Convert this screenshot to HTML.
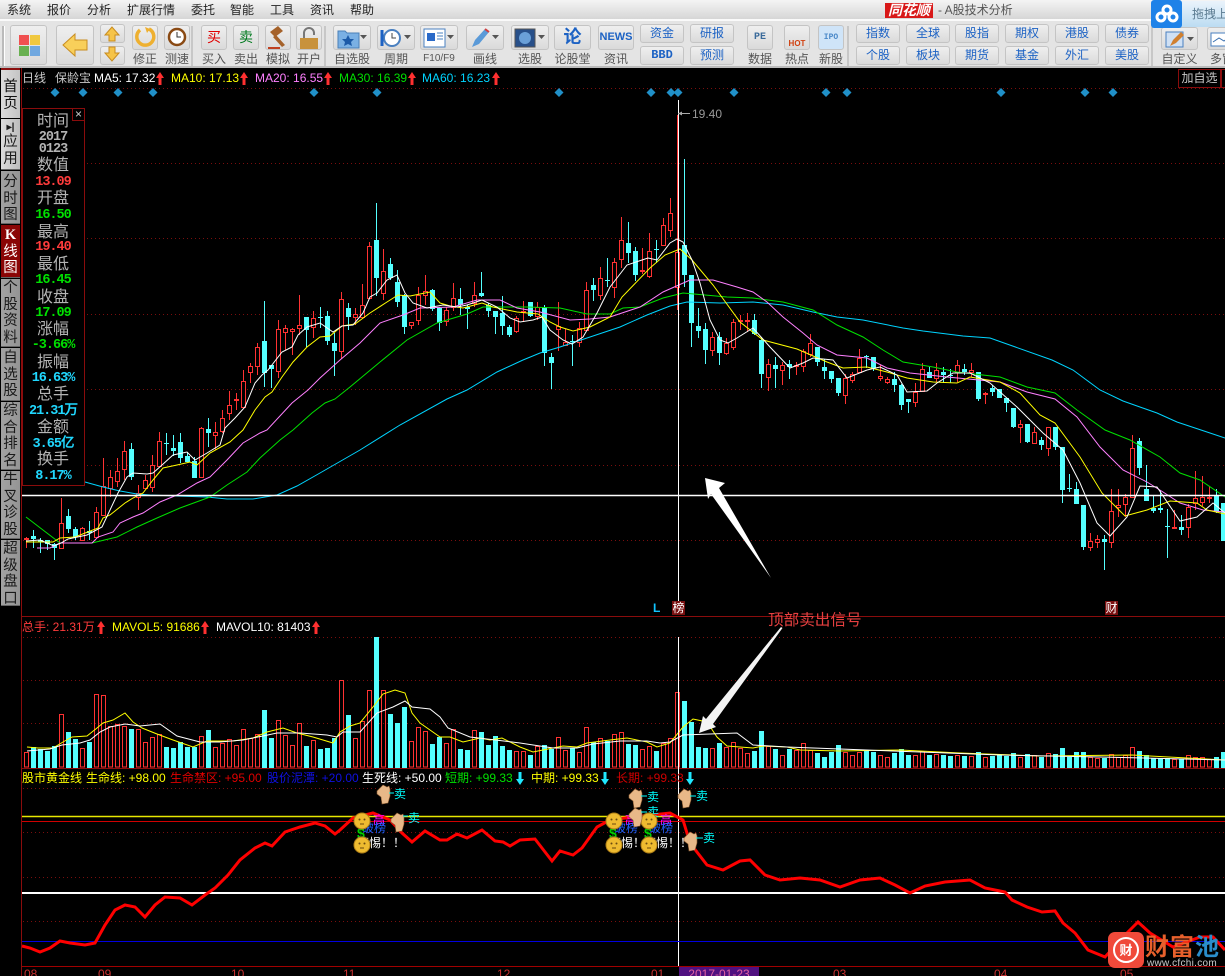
<!DOCTYPE html>
<html><head><meta charset="utf-8"><style>
html,body{margin:0;padding:0;background:#000}
#w{position:relative;width:1225px;height:976px;overflow:hidden;background:#000;font:12px "Liberation Sans","Noto Sans CJK SC",sans-serif}
#w div,#w span.a{position:absolute;white-space:nowrap}
.b{background:linear-gradient(#efefef,#dadada);border:1px solid #c4c4c4;border-radius:3px;box-sizing:border-box}
.l{color:#555;top:52px;line-height:14px;text-align:center;font-size:12px}
.bl{color:#1c62c4;text-align:center;font-size:12px;line-height:17px}
.s{left:1px;width:19px;background:linear-gradient(90deg,#a2a2a2,#949494);color:#1a1a1a;text-align:center;font-size:14.5px;line-height:16.5px;white-space:normal!important;box-sizing:border-box;border:1px solid #666;border-width:0 0 1px}
.i{left:23px;width:60px;text-align:center;font-size:16px;line-height:16px;color:#b4b4b4}
.n{font:bold 13.5px/14px "Liberation Mono",monospace;letter-spacing:-1px}
.h{line-height:14px;font-size:12px}
</style></head><body><div id="w">
<div style="left:0;top:0;width:1225px;height:68px;background:#e4e4e4"></div>
<div style="left:0;top:0;width:1225px;height:19px;background:linear-gradient(#f4f4f4,#d6d6d6)"></div>
<div style="left:0;top:19px;width:1225px;height:2px;background:#fafafa"></div>
<div style="left:0;top:66px;width:1225px;height:2px;background:#bbb"></div>
<div class="h" style="left:7px;top:3px;color:#222">系统</div><div class="h" style="left:47px;top:3px;color:#222">报价</div><div class="h" style="left:87px;top:3px;color:#222">分析</div><div class="h" style="left:127px;top:3px;color:#222">扩展行情</div><div class="h" style="left:191px;top:3px;color:#222">委托</div><div class="h" style="left:230px;top:3px;color:#222">智能</div><div class="h" style="left:270px;top:3px;color:#222">工具</div><div class="h" style="left:310px;top:3px;color:#222">资讯</div><div class="h" style="left:350px;top:3px;color:#222">帮助</div>
<div style="left:885px;top:3px;width:48px;height:15px;background:#d81818;color:#fff;font:italic bold 14px/15px 'Liberation Sans','Noto Sans CJK SC',sans-serif;text-align:center">同花顺</div>
<div style="left:938px;top:3px;color:#555;line-height:14px">- A股技术分析</div>

<div style="left:2px;top:26px;width:2px;height:40px;background:#bbb;border-right:1px solid #fff"></div>
<div class="b" style="left:10px;top:25px;width:37px;height:40px"></div>
<div style="left:19px;top:35px;width:10px;height:10px;background:#f05050"></div><div style="left:30px;top:35px;width:10px;height:10px;background:#f0c840"></div><div style="left:19px;top:46px;width:10px;height:10px;background:#68b050"></div><div style="left:30px;top:46px;width:10px;height:10px;background:#70a8e0"></div>
<div class="b" style="left:56px;top:25px;width:38px;height:40px"></div>
<div class="b" style="left:100px;top:24px;width:25px;height:19px"></div><div class="b" style="left:100px;top:46px;width:25px;height:19px"></div>
<div class="b" style="left:132px;top:25px;width:26px;height:25px"></div><div class="b" style="left:164px;top:25px;width:26px;height:25px"></div>
<div class="b" style="left:201px;top:25px;width:26px;height:25px;color:#e00000;text-align:center;font-size:14px;line-height:23px">买</div>
<div class="b" style="left:233px;top:25px;width:26px;height:25px;color:#007a1e;text-align:center;font-size:14px;line-height:23px">卖</div>
<div class="b" style="left:265px;top:25px;width:26px;height:25px"></div><div class="b" style="left:296px;top:25px;width:26px;height:25px"></div>
<div class="b" style="left:333px;top:25px;width:38px;height:25px"></div><div class="b" style="left:377px;top:25px;width:38px;height:25px"></div><div class="b" style="left:420px;top:25px;width:38px;height:25px"></div><div class="b" style="left:466px;top:25px;width:38px;height:25px"></div><div class="b" style="left:511px;top:25px;width:38px;height:25px"></div>
<div class="b" style="left:554px;top:25px;width:37px;height:25px;color:#1c62c4;text-align:center;font:bold 18px/22px 'Liberation Sans','Noto Sans CJK SC',sans-serif">论</div>
<div class="b" style="left:598px;top:25px;width:36px;height:25px;color:#1c62c4;text-align:center;font:bold 11px/23px 'Liberation Sans',sans-serif;overflow:hidden">NEWS</div>
<div class="b" style="left:747px;top:25px;width:26px;height:25px;color:#3a6a9a;font:bold 10px/23px 'Liberation Mono',monospace;text-align:center">PE</div>
<div class="b" style="left:784px;top:25px;width:26px;height:25px;color:#d04010;font:bold 8px/36px 'Liberation Sans',sans-serif;text-align:center">HOT</div>
<div class="b" style="left:818px;top:25px;width:26px;height:25px;color:#4a88c8;font:bold 8px/23px 'Liberation Mono',monospace;text-align:center;background:#cfe4f8">IPO</div>
<div class="b" style="left:1161px;top:27px;width:37px;height:23px"></div><div class="b" style="left:1207px;top:27px;width:30px;height:23px"></div>
<svg style="position:absolute;left:0;top:20px" width="1225" height="48">
<path d="M192 6V46M325 6V46M848 6V46M1152 6V46" stroke="#aaa" fill="none"/>
<path d="M63 25l12-11v6h12v10h-12v6z" fill="#f8cf5a" stroke="#c88c20"/>
<path d="M112 7l-7 8h4v6h6v-6h4z" fill="#f6c448" stroke="#c88c20"/><path d="M112 41l-7-8h4v-6h6v6h4z" fill="#f6c448" stroke="#c88c20"/>
<path d="M140 10a8.500 8.500 0 1 0 9 -1" fill="none" stroke="#eeb030" stroke-width="3.500"/><path d="M145 7l5 2-3 4z" fill="#eeb030"/>
<circle cx="177" cy="17" r="8" fill="#fff" stroke="#8a4a14" stroke-width="2.500"/><path d="M177 12v5h4" stroke="#333" fill="none"/>
<path d="M270 12l8-6 5 5-8 6zM276 15l9 10-3 2-9-10z" fill="#a5622a"/><path d="M268 27h12v2h-12z" fill="#c04020"/>
<path d="M300 18h18v11h-18z" fill="#c8923c"/><path d="M304 18v-5a5 5 0 0 1 10 0v2" fill="none" stroke="#777" stroke-width="2"/>
<path d="M338 11h7l2 2h12v15h-21z" fill="#7ab0e4" stroke="#4a80b8"/><path d="M348 15l2 4h4l-3 3 1 4-4-2-4 2 1-4-3-3h4z" fill="#1c5aa8"/><path d="M360 15h7l-3.500 4z" fill="#555"/>
<circle cx="392" cy="18" r="8" fill="#fff" stroke="#4a80c0" stroke-width="2"/><path d="M382 10v16" stroke="#1c62c4" stroke-width="3"/><path d="M392 13v5h4" stroke="#444" fill="none"/><path d="M404 15h7l-3.500 4z" fill="#555"/>
<path d="M424 9h21v18h-21z" fill="#fff" stroke="#4a80c0"/><path d="M427 13h8v8h-8z" fill="#2a6ac8"/><path d="M437 13h6M437 16h6M437 19h6" stroke="#4a80c0"/><path d="M447 15h7l-3.500 4z" fill="#555"/>
<path d="M472 27l3-7 10-11 4 3-10 12z" fill="#5a9ad8"/><path d="M485 9l4 3" stroke="#d04040" stroke-width="2"/><path d="M492 15h7l-3.500 4z" fill="#555"/>
<rect x="515" y="9" width="20" height="18" fill="#28508a" stroke="#555"/><circle cx="525" cy="18" r="6" fill="#6aa0d8"/><path d="M538 15h7l-3.500 4z" fill="#555"/>
<path d="M1166 12h17v15h-17z" fill="#cfe0f4" stroke="#4a80c0"/><path d="M1170 26l3-6 8-8 3 3-8 8z" fill="#d08030"/><path d="M1187 17h7l-3.500 4z" fill="#555"/>
<path d="M1211 13h22v13h-22z" fill="#fff" stroke="#4a80c0"/><path d="M1213 22l6-4 5 3 7-5" stroke="#3a70b0" fill="none"/>
</svg>
<div class="l" style="left:132px;width:26px">修正</div><div class="l" style="left:164px;width:26px">测速</div><div class="l" style="left:201px;width:26px">买入</div><div class="l" style="left:233px;width:26px">卖出</div><div class="l" style="left:265px;width:26px">模拟</div><div class="l" style="left:296px;width:26px">开户</div><div class="l" style="left:333px;width:38px">自选股</div><div class="l" style="left:377px;width:38px">周期</div><div class="l" style="left:420px;width:38px;font-size:10px">F10/F9</div><div class="l" style="left:466px;width:38px">画线</div><div class="l" style="left:511px;width:38px">选股</div><div class="l" style="left:554px;width:37px">论股堂</div><div class="l" style="left:598px;width:36px">资讯</div><div class="l" style="left:747px;width:26px">数据</div><div class="l" style="left:784px;width:26px">热点</div><div class="l" style="left:818px;width:26px">新股</div><div class="l" style="left:1161px;width:37px">自定义</div><div class="l" style="left:1207px;width:30px">多窗</div>
<div class="b bl" style="left:640px;top:24px;width:44px;height:19px">资金</div><div class="b bl" style="left:690px;top:24px;width:44px;height:19px">研报</div><div class="b bl" style="left:640px;top:46px;width:44px;height:19px;font-weight:bold;font-family:'Liberation Mono',monospace">BBD</div><div class="b bl" style="left:690px;top:46px;width:44px;height:19px">预测</div>
<div class="b bl" style="left:856px;top:24px;width:44px;height:19px">指数</div><div class="b bl" style="left:906px;top:24px;width:44px;height:19px">全球</div><div class="b bl" style="left:955px;top:24px;width:44px;height:19px">股指</div><div class="b bl" style="left:1005px;top:24px;width:44px;height:19px">期权</div><div class="b bl" style="left:1055px;top:24px;width:44px;height:19px">港股</div><div class="b bl" style="left:1105px;top:24px;width:44px;height:19px">债券</div>
<div class="b bl" style="left:856px;top:46px;width:44px;height:19px">个股</div><div class="b bl" style="left:906px;top:46px;width:44px;height:19px">板块</div><div class="b bl" style="left:955px;top:46px;width:44px;height:19px">期货</div><div class="b bl" style="left:1005px;top:46px;width:44px;height:19px">基金</div><div class="b bl" style="left:1055px;top:46px;width:44px;height:19px">外汇</div><div class="b bl" style="left:1105px;top:46px;width:44px;height:19px">美股</div>
<div style="left:1181px;top:1px;width:44px;height:26px;background:linear-gradient(#eaf3fb,#bcdcf2);color:#5a7a90;line-height:26px;padding-left:11px;box-sizing:border-box;overflow:hidden">拖拽上</div>
<div style="left:1151px;top:0;width:31px;height:28px;background:#1e82e8;border-radius:3px"></div>
<svg style="position:absolute;left:1153px;top:2px" width="28" height="24"><circle cx="14" cy="8" r="4" fill="none" stroke="#fff" stroke-width="3"/><circle cx="8" cy="15" r="4" fill="none" stroke="#fff" stroke-width="3"/><circle cx="20" cy="15" r="4" fill="none" stroke="#fff" stroke-width="3"/></svg>

<svg id="c" style="position:absolute;left:0;top:0" width="1225" height="976">
<g stroke="#7a0e0e" fill="none" stroke-dasharray="1 3">
<path d="M23 88.500H1225M23 163.500H1225M23 238.500H1225M23 314.500H1225M23 389.500H1225M23 465.500H1225M23 540.500H1225M23 637.500H1225M23 680.500H1225M23 723.500H1225M23 788.500H1225M23 832.500H1225M23 877.500H1225M23 921.500H1225"/>
</g>
<path d="M21.500 68V976M22 616.500H1225M22 768.500H1225" stroke="#8a0c0c" fill="none"/>
<path d="M22 966.500H1225" stroke="#a00000"/>
<g id="vol"></g>
<g id="cand"></g>
<g fill="none" stroke-width="1">
<polyline stroke="#00d4ff" points="85,482 103,487 120,491 137,494 150,495 177,496 207,497 227,499 253,499 277,495 297,486 320,473 360,450 400,425 447,399 467,390 497,372 523,360 540,353 560,347 587,338 620,327 647,315 670,306 687,302 720,303 753,302 783,305 813,312 837,317 863,320 903,328 923,331 963,336 990,338 1052,360 1073,370 1100,390 1123,401 1157,413 1177,422 1207,432 1225,438"/>
<polyline stroke="#00e000" points="26,517 60,543 92,543 117,537 137,527 157,518 180,508 210,497 227,485 247,472 260,458 280,440 293,430 312,413 325,403 335,399 350,387 380,362 407,340 437,323 467,314 483,307 527,307 560,308 587,314 610,314 623,308 640,307 663,298 683,293 727,297 753,298 783,302 813,310 837,325 863,337 883,350 903,362 933,367 957,372 1000,377 1027,387 1055,393 1077,410 1105,430 1130,440 1160,457 1180,473 1200,480 1225,497"/>
<polyline stroke="#ff80ff" points="37,548 50,548 60,543 92,543 98,537 113,532 120,523 133,517 143,513 160,502 177,495 197,483 210,477 227,460 243,443 260,433 267,430 292,403 308,390 320,378 340,360 360,343 380,323 403,315 420,308 453,307 477,300 500,300 517,308 540,312 570,320 590,319 610,317 640,307 663,292 690,280 713,280 737,287 753,292 767,302 783,317 803,333 817,345 837,355 867,358 887,368 910,373 947,377 1000,382 1027,392 1055,399 1077,417 1100,447 1123,470 1147,482 1163,492 1180,503 1203,510 1225,512"/>
<polyline stroke="#ffff00" points="26,542 53,542 60,538 75,537 98,528 103,518 110,515 120,507 125,503 133,498 143,493 153,480 163,468 177,465 190,462 197,465 210,453 230,442 243,430 255,410 265,397 272,392 282,377 293,362 307,347 320,337 330,336 342,326 355,324 370,313 387,302 398,295 410,296 420,294 430,292 440,303 450,306 463,308 482,303 493,307 517,312 538,314 550,322 560,327 573,331 590,327 610,317 622,297 650,268 665,255 680,249 692,260 713,285 740,322 763,340 797,349 827,362 843,368 867,367 887,372 907,378 933,382 957,383 970,377 1000,382 1020,393 1040,415 1055,423 1080,457 1102,493 1125,516 1147,510 1170,501 1197,503 1207,510 1225,514"/>
<polyline stroke="#fff" points="26,541 40,540 54,546 61,543 68,539 87,535 102,527 110,510 118,493 127,477 133,473 147,474 153,473 162,465 173,455 187,452 195,460 207,453 220,445 225,428 235,418 245,407 255,383 262,375 268,370 282,352 292,347 298,335 307,327 320,323 333,332 342,326 353,325 363,313 370,297 377,293 387,280 397,275 405,293 413,303 427,308 443,305 457,307 467,305 482,300 497,307 510,318 520,322 533,320 542,317 550,330 563,340 572,344 583,337 597,313 610,287 627,265 648,258 657,260 670,243 677,239 683,242 692,260 700,283 710,320 720,340 728,343 737,338 753,328 770,347 790,368 803,363 813,358 833,360 847,378 867,370 880,367 897,375 907,392 927,391 937,383 953,373 970,373 990,383 1017,407 1043,433 1063,450 1080,483 1097,523 1110,536 1127,517 1140,486 1157,487 1180,521 1197,517 1213,503 1225,513"/>
<polyline stroke="#ffff00" points="27,747 38,748 53,748 63,742 72,737 87,736 97,728 103,723 113,720 125,713 133,722 142,728 157,734 173,740 193,747 207,741 233,741 253,738 267,732 283,728 297,733 313,737 333,743 340,732 350,726 360,723 373,707 383,694 395,690 405,693 412,713 420,723 430,730 440,737 450,737 463,742 480,738 490,740 502,738 520,747 533,752 553,748 563,746 577,747 587,743 610,740 627,738 647,742 657,747 670,743 683,727 693,719 707,722 717,737 727,746 753,748 763,746 787,747 800,750 840,751 900,750 960,753 1040,756 1132,755 1225,760"/>
<polyline stroke="#fff" points="27,751 50,749 62,745 80,743 90,740 100,732 110,727 125,724 140,726 160,724 177,736 200,742 220,742 243,740 263,736 277,733 300,733 327,735 337,737 343,732 360,732 377,713 393,707 405,701 412,707 430,709 440,717 448,728 470,737 487,739 520,743 553,748 577,748 593,744 620,741 647,741 660,743 670,742 683,735 737,733 753,745 787,747 840,749 920,752 1000,755 1100,757 1225,760"/>
</g>
<path d="M22 495.500H1225" stroke="#fff" stroke-width="1.500"/>
<path d="M678.500 100V614M678.500 637V966" stroke="#fff"/>
<path d="M678 113.500H690" stroke="#aaa"/><path d="M678 113.500l4-2v4z" fill="#aaa"/>
<path d="M22 816.500H1225" stroke="#e8e800" stroke-width="1.400"/><path d="M22 821.500H1225" stroke="#d00000"/>
<path d="M22 893H1225" stroke="#fff" stroke-width="2"/><path d="M22 941.500H1225" stroke="#0000e0"/>
<polyline fill="none" stroke="#f00" stroke-width="3" points="22,946 30,948 40,952 50,948 60,941 70,943 85,945 95,943 105,925 115,910 125,905 135,907 145,917 155,905 165,897 180,898 192,905 205,895 215,888 228,875 240,860 255,848 265,843 272,846 285,832 300,827 315,823 325,826 335,834 340,830 353,818 373,813 390,820 402,833 412,842 425,831 440,840 447,840 457,834 467,838 482,830 495,841 503,842 510,846 520,840 535,839 552,861 560,851 573,855 582,848 597,827 610,820 633,817 670,813 683,820 690,843 707,865 723,870 740,861 750,860 765,875 780,880 800,878 820,880 840,887 860,880 880,878 895,885 910,893 925,886 945,882 970,880 985,888 1005,892 1012,900 1027,907 1042,912 1055,911 1063,923 1075,933 1088,950 1105,957 1127,933 1138,922 1150,933 1173,947 1200,937 1213,937 1225,950"/>
<path d="M705 478L725 483L719 488L771 578L711 494L708 499Z" fill="#fff"/>
<path d="M782.500 628L713 724L716 727L699 733L703 716L706 719L781 627Z" fill="#f4f4f4"/>
<g fill="#2090c8" id="dm"></g>
</svg>

<div style="left:1px;top:68px;width:19px;height:50px;background:linear-gradient(90deg,#dcdcdc,#c4c4c4);border-top:2px solid #8a1010;box-sizing:border-box;color:#111;font-size:14.500px;line-height:16.500px;text-align:center;white-space:normal;padding-top:9px">首页</div>
<div class="s" style="top:119px;height:51px;background:linear-gradient(90deg,#dcdcdc,#bcbcbc);padding-top:3px"><b style="font-size:10px;display:block;line-height:12px">▸|</b>应用</div>
<div class="s" style="top:171px;height:53px;padding-top:3px">分时图</div>
<div class="s" style="top:225px;height:53px;background:#8a0606;color:#fff;padding-top:2px"><b style="font-family:'Liberation Serif',serif">K</b><br>线图</div>
<div class="s" style="top:279px;height:68px;padding-top:1px">个股资料</div>
<div class="s" style="top:348px;height:53px;padding-top:2px">自选股</div>
<div class="s" style="top:402px;height:68px;padding-top:1px">综合排名</div>
<div class="s" style="top:471px;height:68px;padding-top:1px">牛叉诊股</div>
<div class="s" style="top:540px;height:66px;padding-top:1px">超级盘口</div>

<div class="h" style="left:22px;top:71px;color:#c8c8c8">日线</div><div class="h" style="left:55px;top:71px;color:#c8c8c8">保龄宝</div>
<div class="h" style="left:94px;top:71px;color:#fff">MA5: 17.32</div>
<div class="h" style="left:171px;top:71px;color:#ff0">MA10: 17.13</div>
<div class="h" style="left:255px;top:71px;color:#ff80ff">MA20: 16.55</div>
<div class="h" style="left:339px;top:71px;color:#00e000">MA30: 16.39</div>
<div class="h" style="left:422px;top:71px;color:#00d4ff">MA60: 16.23</div>
<div style="left:1178px;top:69px;width:43px;height:19px;border:1px solid #8a0c0c;box-sizing:border-box;background:#000;color:#c8c8c8;text-align:center;line-height:17px">加自选</div>
<div style="left:1221px;top:69px;width:10px;height:19px;border:1px solid #8a0c0c;box-sizing:border-box;background:#000"></div>
<div style="left:692px;top:107px;color:#999;line-height:14px">19.40</div>

<div style="left:22px;top:108px;width:63px;height:378px;background:#000;border:1px solid #8a0c0c;box-sizing:border-box"></div>
<div style="left:72px;top:108px;width:13px;height:13px;border:1px solid #8a0c0c;box-sizing:border-box;color:#ccc;font-size:12px;line-height:11px;text-align:center">×</div>
<div class="i" style="top:114px">时间</div><div class="i n" style="top:131px">2017</div><div class="i n" style="top:143px">0123</div><div class="i" style="top:158px">数值</div><div class="i n" style="top:176px;color:#ff3c3c">13.09</div><div class="i" style="top:191px">开盘</div><div class="i n" style="top:209px;color:#00e000">16.50</div><div class="i" style="top:225px">最高</div><div class="i n" style="top:241px;color:#ff3c3c">19.40</div><div class="i" style="top:257px">最低</div><div class="i n" style="top:274px;color:#00e000">16.45</div><div class="i" style="top:290px">收盘</div><div class="i n" style="top:307px;color:#00e000">17.09</div><div class="i" style="top:322px">涨幅</div><div class="i n" style="top:339px;color:#00e000">-3.66%</div><div class="i" style="top:355px">振幅</div><div class="i n" style="top:372px;color:#20d8ff">16.63%</div><div class="i" style="top:387px">总手</div><div class="i n" style="top:405px;color:#20d8ff">21.31万</div><div class="i" style="top:420px">金额</div><div class="i n" style="top:438px;color:#20d8ff">3.65亿</div><div class="i" style="top:452px">换手</div><div class="i n" style="top:470px;color:#20d8ff">8.17%</div>

<div style="left:653px;top:601px;color:#10c4ff;line-height:14px;font-weight:bold">L</div>
<div style="left:672px;top:601px;width:13px;height:14px;background:#7a1010;color:#fff;line-height:14px;text-align:center">榜</div>
<div style="left:1105px;top:601px;width:13px;height:14px;background:#7a1010;color:#fff;line-height:14px;text-align:center">财</div>
<div style="left:768px;top:612px;color:#e84040;font-size:15.600px;line-height:18px">顶部卖出信号</div>

<div class="h" style="left:22px;top:620px;color:#ff3c3c">总手: 21.31万</div>
<div class="h" style="left:112px;top:620px;color:#ff0">MAVOL5: 91686</div>
<div class="h" style="left:216px;top:620px;color:#fff">MAVOL10: 81403</div>

<div class="h" style="left:22px;top:771px;color:#ff0">股市黄金线</div><div class="h" style="left:86px;top:771px;color:#ff0">生命线: +98.00</div><div class="h" style="left:170px;top:771px;color:#e00000">生命禁区: +95.00</div><div class="h" style="left:267px;top:771px;color:#1010e0">股价泥潭: +20.00</div><div class="h" style="left:362px;top:771px;color:#fff">生死线: +50.00</div><div class="h" style="left:445px;top:771px;color:#00e000">短期: +99.33</div><div class="h" style="left:531px;top:771px;color:#ff0">中期: +99.33</div><div class="h" style="left:616px;top:771px;color:#d00000">长期: +99.33</div>

<div class="h" style="left:394px;top:787px;color:#0ff">卖</div><div class="h" style="left:408px;top:811px;color:#0ff">卖</div><div class="h" style="left:647px;top:790px;color:#0ff">卖</div><div class="h" style="left:647px;top:805px;color:#0ff">卖</div><div class="h" style="left:696px;top:789px;color:#0ff">卖</div><div class="h" style="left:703px;top:831px;color:#0ff">卖</div>
<div class="h" style="left:373px;top:813px;color:#f0f">高</div><div class="h" style="left:625px;top:813px;color:#f0f">高</div><div class="h" style="left:660px;top:813px;color:#f0f">高</div>
<div class="h" style="left:362px;top:821px;color:#2060ff">破榜</div><div class="h" style="left:614px;top:821px;color:#2060ff">破榜</div><div class="h" style="left:649px;top:821px;color:#2060ff">破榜</div>
<div class="h" style="left:357px;top:826px;color:#00d000;font-weight:bold;font-size:14px">$</div><div class="h" style="left:609px;top:826px;color:#00d000;font-weight:bold;font-size:14px">$</div><div class="h" style="left:644px;top:826px;color:#00d000;font-weight:bold;font-size:14px">$</div>
<div class="h" style="left:357px;top:836px;color:#fff">警惕！！</div><div class="h" style="left:609px;top:836px;color:#fff">警惕！</div><div class="h" style="left:644px;top:836px;color:#fff">警惕！！</div>

<svg style="position:absolute;left:0;top:0" width="1225" height="976">
<defs>
<g id="fc"><circle cx="0" cy="0" r="8" fill="#eebb30" stroke="#b08018"/><circle cx="-2.500" cy="-1.500" r="1" fill="#6a4a10"/><circle cx="2.500" cy="-1.500" r="1" fill="#6a4a10"/><path d="M-2 3h4" stroke="#6a4a10"/></g>
<g id="hd"><path d="M-6-2l6-6 4 2 2-1 1 3v7l-2 7-6 1-1-7-4-3z" fill="#e8b888" stroke="#8a5a30" stroke-width=".6"/></g>
<path id="up" d="M0 0l4 6h-2.500v7h-3v-7h-2.500z" fill="#ff3030"/>
<path id="dn" d="M0 13l4-6h-2.500v-7h-3v7h-2.500z" fill="#20e8ff"/>
</defs>
<use href="#fc" x="362" y="821"/><use href="#fc" x="362" y="845"/><use href="#fc" x="614" y="821"/><use href="#fc" x="614" y="845"/><use href="#fc" x="649" y="821"/><use href="#fc" x="649" y="845"/>
<use href="#hd" x="383" y="793"/><use href="#hd" x="397" y="821"/><use href="#hd" x="635" y="797"/><use href="#hd" x="635" y="816"/><use href="#hd" x="684" y="797"/><use href="#hd" x="690" y="840"/>
<path d="M389 793h5M403 816h5M641 796h6M641 812h6M690 796h6M696 838h7" stroke="#0ff"/>
<use href="#up" x="160" y="72"/><use href="#up" x="244" y="72"/><use href="#up" x="328" y="72"/><use href="#up" x="412" y="72"/><use href="#up" x="496" y="72"/>
<use href="#up" x="101" y="621"/><use href="#up" x="205" y="621"/><use href="#up" x="316" y="621"/>
<use href="#dn" x="520" y="772"/><use href="#dn" x="605" y="772"/><use href="#dn" x="690" y="772"/>
</svg>

<div style="left:1108px;top:932px;width:36px;height:36px;border-radius:7px;background:#f04a3a"></div>
<div style="left:1113px;top:937px;width:26px;height:26px;border-radius:50%;border:2px solid #fff;box-sizing:border-box;color:#fff;font:bold 13px/22px 'Noto Sans CJK SC',sans-serif;text-align:center">财</div>
<div style="left:1145px;top:931px;font:bold 24px/28px 'Noto Sans CJK SC',sans-serif;color:#e8602c;letter-spacing:1px">财富<span style="color:#2a8ecc">池</span></div>
<div style="left:1147px;top:958px;color:#ccc;font-size:10px;line-height:12px;letter-spacing:.3px;text-shadow:0 0 1px #000">www.cfchi.com</div>

<div class="h" style="left:24px;top:967px;color:#c83030">08</div><div class="h" style="left:98px;top:967px;color:#c83030">09</div><div class="h" style="left:231px;top:967px;color:#c83030">10</div><div class="h" style="left:343px;top:967px;color:#c83030">11</div><div class="h" style="left:497px;top:967px;color:#c83030">12</div><div class="h" style="left:651px;top:967px;color:#c83030">01</div><div class="h" style="left:833px;top:967px;color:#c83030">03</div><div class="h" style="left:994px;top:967px;color:#c83030">04</div><div class="h" style="left:1120px;top:967px;color:#c83030">05</div>
<div style="left:679px;top:967px;width:80px;height:10px;background:#501080;color:#e060a0;line-height:14px;text-align:center">2017-01-23</div>
</div>
<script>
var D="26 r 537 538 539 548 752,33 c 530 536 539 548 747,40 c 538 540 542 553 749,47 c 540 540 544 550 751,54 c 543 544 548 560 746,61 r 498 523 548 549 714,68 c 509 516 529 533 732,75 c 527 529 537 540 739,82 r 527 528 540 540 748,89 c 521 531 533 540 742,96 r 507 512 537 537 694,103 r 458 486 515 515 695,110 r 470 477 488 497 726,117 r 458 471 481 487 724,124 r 441 451 469 480 726,131 c 443 449 477 480 729,138 r 485 493 497 510 729,145 r 475 480 488 488 742,152 r 455 465 487 492 737,159 r 432 441 466 466 734,166 c 433 443 444 455 747,173 c 435 448 451 456 748,180 c 433 442 458 463 742,187 c 452 456 462 462 747,194 c 457 461 478 478 747,201 r 427 428 477 477 736,208 c 418 429 433 447 730,215 r 422 432 435 450 747,222 r 410 418 431 433 743,229 r 391 405 413 420 739,236 r 393 399 400 410 745,243 r 370 381 407 407 729,250 r 363 366 372 383 738,257 r 343 347 366 375 734,264 c 301 341 373 387 710,271 c 365 365 369 388 738,278 r 320 329 371 378 720,285 r 325 328 332 350 735,292 r 328 329 331 355 745,299 r 295 325 328 335 723,306 c 317 317 330 347 746,313 r 311 318 327 338 740,320 c 307 317 318 328 749,327 c 311 316 341 345 748,334 c 333 343 351 376 738,341 r 292 299 351 359 680,348 c 303 308 317 330 715,355 r 308 314 317 325 738,362 r 284 305 317 319 721,369 r 242 246 298 298 690,376 c 203 240 278 296 637,383 r 249 271 293 300 690,390 c 258 264 278 280 714,397 c 270 282 302 307 723,404 c 294 295 327 334 707,411 r 322 322 325 329 741,418 r 287 295 320 325 727,425 r 275 291 295 305 731,432 c 289 290 309 311 744,439 c 307 308 323 331 737,446 r 307 310 321 326 743,453 r 283 298 307 311 729,460 c 288 299 305 315 749,467 c 305 307 309 329 750,474 r 282 295 303 307 730,481 c 272 293 296 297 732,488 c 303 305 311 317 745,495 c 311 311 317 334 736,502 c 296 313 326 335 746,509 c 325 327 335 337 750,516 r 316 318 331 333 751,523 r 301 311 312 322 751,530 c 302 302 316 317 755,537 r 302 307 316 320 746,544 c 305 307 353 366 745,551 c 353 357 363 389 749,558 r 302 326 329 351 737,565 r 329 342 345 345 750,572 c 335 341 342 366 748,579 r 322 328 342 347 752,586 r 282 290 330 330 727,593 c 278 285 290 301 742,600 r 267 278 295 300 738,607 c 258 280 281 287 741,614 r 258 262 287 298 734,621 r 217 240 259 268 732,628 c 222 243 253 263 744,635 c 247 251 275 281 745,642 r 248 270 271 274 749,649 r 233 251 276 278 746,656 c 240 249 250 263 751,663 r 218 225 245 245 743,670 r 198 213 230 237 738,677 r 115 252 287 310 692,684 c 159 245 275 287 701,691 c 275 275 323 347 722,698 c 308 326 331 338 747,705 c 323 329 350 364 748,712 r 332 337 350 356 748,719 c 332 337 353 365 743,726 r 338 343 353 355 747,733 r 319 322 347 350 742,740 r 315 320 321 330 748,747 r 313 320 321 332 753,754 c 314 320 334 335 751,761 c 337 340 374 388 731,768 r 359 364 377 391 746,775 c 357 365 369 388 749,782 r 362 365 370 385 755,789 c 360 364 367 379 749,796 r 362 365 366 375 750,803 r 349 351 366 372 743,810 r 334 343 354 357 750,817 c 347 347 362 366 753,824 c 359 367 371 379 757,831 c 371 371 379 383 752,838 c 378 378 393 396 745,845 r 374 378 395 404 752,852 r 372 374 380 383 755,859 r 349 358 372 373 752,866 c 355 356 357 368 751,873 c 357 357 368 371 752,880 r 365 376 378 381 755,887 r 377 379 382 384 757,894 c 372 379 385 392 753,901 c 384 385 405 410 749,908 c 399 399 402 413 755,915 r 383 392 402 407 755,922 r 363 369 391 392 751,929 c 367 372 378 378 755,936 r 363 370 378 382 754,943 c 367 372 375 383 755,950 c 369 375 376 383 756,957 r 360 365 372 382 755,964 c 364 369 372 375 756,971 r 363 370 372 377 756,978 c 372 372 399 401 752,985 r 392 393 394 404 757,992 c 385 388 392 396 756,999 c 389 389 398 398 755,1006 c 398 398 403 412 756,1013 c 408 408 427 428 753,1020 r 420 424 427 443 757,1027 c 424 424 442 443 754,1034 r 427 432 443 443 755,1041 c 437 440 445 450 757,1048 r 427 427 448 456 753,1055 c 427 427 447 450 754,1062 c 447 447 490 503 748,1069 c 474 488 489 492 757,1076 c 482 489 504 504 752,1083 c 505 505 547 550 752,1090 r 533 541 547 551 757,1097 r 535 539 542 548 758,1104 c 535 539 542 570 758,1111 r 489 511 542 548 754,1118 r 489 505 507 517 757,1125 r 494 497 504 517 755,1132 r 435 448 497 498 747,1139 c 438 441 468 475 751,1146 c 465 489 501 501 755,1153 c 495 508 511 513 758,1160 c 490 508 510 513 758,1167 c 509 526 527 558 758,1174 r 510 527 528 529 759,1181 c 515 527 530 535 759,1188 r 504 507 527 538 755,1195 r 471 498 503 510 757,1202 r 476 497 502 506 757,1209 r 486 497 498 503 759,1216 c 489 495 512 513 757,1223 c 503 503 541 541 752".split(",");
var rw="",rb="",cw="",cb="",vr="",vc="";
D.forEach(function(s){var p=s.split(" "),x=+p[0],w=+p[2],t=+p[3],b=+p[4],z=+p[5],v=+p[6];
var wk="M"+(x+.5)+" "+w+"V"+z;
if(p[1]=="r"){rw+=wk;rb+="M"+(x-1.5)+" "+(t+.5)+"h4v"+Math.max(b-t,1)+"h-4z";vr+="M"+(x-1.5)+" "+(v+.5)+"h4V767h-4z";}
else{cw+=wk;cb+="M"+(x-2)+" "+t+"h5V"+Math.max(b,t+1)+"h-5z";vc+="M"+(x-2)+" "+v+"h5V768h-5z";}});
document.getElementById("vol").innerHTML='<path d="'+vc+'" fill="#54ffff" shape-rendering="crispEdges"/><path d="'+vr+'" fill="none" stroke="#ff3232" shape-rendering="crispEdges"/>';
document.getElementById("cand").innerHTML='<path d="'+cw+'" stroke="#54ffff" fill="none" shape-rendering="crispEdges"/><path d="'+cb+'" fill="#54ffff" shape-rendering="crispEdges"/><path d="'+rw+'" stroke="#ff3232" fill="none" shape-rendering="crispEdges"/><path d="'+rb+'" fill="#000" stroke="#ff3232" shape-rendering="crispEdges"/>';
var dm="";[55,83,118,153,314,377,559,651,671,678,734,826,847,1001,1085,1113].forEach(function(x){dm+='<path d="M'+x+' 88l4.500 4.500-4.500 4.500-4.500-4.500z"/>'});document.getElementById("dm").innerHTML=dm;
</script>
</body></html>
